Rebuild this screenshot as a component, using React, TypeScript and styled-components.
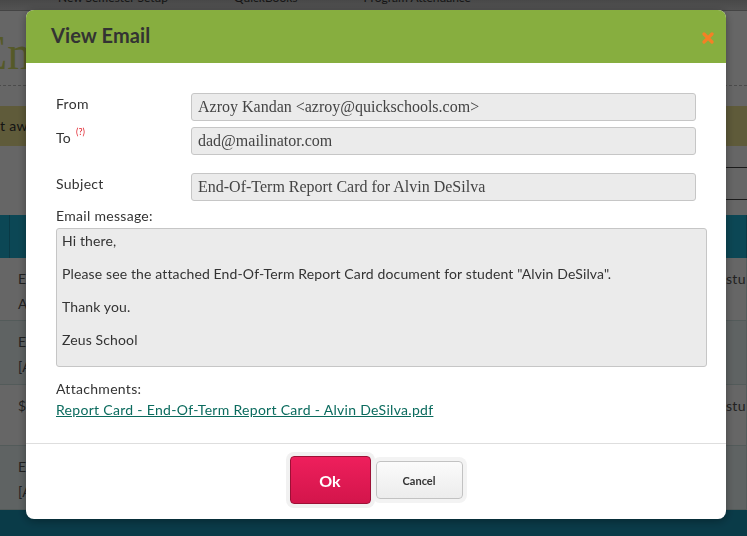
import React from 'react';
import styled, { createGlobalStyle } from 'styled-components';

const GlobalStyle = createGlobalStyle`
  html, body {
    margin: 0;
    padding: 0;
    width: 747px;
    height: 536px;
    overflow: hidden;
    background: #fff;
  }
  * {
    box-sizing: border-box;
  }
`;

const SANS = `Lato, "Open Sans", "Liberation Sans", sans-serif`;
const SERIF = `"Liberation Serif", "DejaVu Serif", serif`;

const message = `Hi there,

Please see the attached End-Of-Term Report Card document for student "Alvin DeSilva".

Thank you.

Zeus School`;

const rows = [
  { left: ['Email', 'Alvin DeSilva'], right: 'student', alt: false },
  { left: ['Email', '[Alvin DeSilva]'], right: '', alt: true },
  { left: ['$ Invoice'], right: 'student', alt: false },
  { left: ['Email', '[Alvin DeSilva]'], right: '', alt: true },
];

const App = () => {
  return (
    <>
      <GlobalStyle />
      <Page>
        <NavBar>
          <NavItem>New Semester Setup</NavItem>
          <NavItem>QuickBooks</NavItem>
          <NavItem>Program Attendance</NavItem>
        </NavBar>
        <PageTitle>Email Report Cards</PageTitle>
        <Banner>ot awaiting delivery are listed below.</Banner>
        <Toolbar>
          <ToolBox />
        </Toolbar>
        <Table>
          <HeadCell />
          <HeadCell />
          <HeadCell />
          {rows.map((r, i) => (
            <React.Fragment key={i}>
              <Cell $alt={r.alt} />
              <Cell $alt={r.alt}>
                {r.left.map((l) => (
                  <div key={l}>{l}</div>
                ))}
              </Cell>
              <Cell $alt={r.alt}>{r.right}</Cell>
            </React.Fragment>
          ))}
        </Table>
        <PageFooter />
      </Page>

      <Curtain />

      <Modal>
        <Header>
          <Title>View Email</Title>
          <CloseButton aria-label="close">
            <svg width="12" height="12" viewBox="0 0 12 12">
              <path d="M2 2 L10 10 M10 2 L2 10" stroke="#f58025" strokeWidth="3.2" strokeLinecap="round" />
            </svg>
          </CloseButton>
        </Header>

        <Body>
          <FieldRow>
            <Label>From</Label>
            <Input>Azroy Kandan &lt;azroy@quickschools.com&gt;</Input>
          </FieldRow>
          <FieldRow $gap={6}>
            <Label>
              To<Help>(?)</Help>
            </Label>
            <Input>dad@mailinator.com</Input>
          </FieldRow>
          <FieldRow $gap={18}>
            <Label>Subject</Label>
            <Input>End-Of-Term Report Card for Alvin DeSilva</Input>
          </FieldRow>

          <BlockLabel>Email message:</BlockLabel>
          <Message>{message}</Message>

          <BlockLabel $top={14}>Attachments:</BlockLabel>
          <AttachLink href="#">Report Card - End-Of-Term Report Card - Alvin DeSilva.pdf</AttachLink>
        </Body>

        <Footer>
          <OkButton>Ok</OkButton>
          <CancelButton>Cancel</CancelButton>
        </Footer>
      </Modal>
    </>
  );
};

/* ---------- page behind the dialog ---------- */

const Page = styled.div`
  width: 747px;
  height: 536px;
  display: flex;
  flex-direction: column;
  font-family: ${SANS};
  color: #555;
  overflow: hidden;
`;

const NavBar = styled.div`
  height: 11px;
  flex: none;
  background: linear-gradient(#b4b4b4, #cdcdcd);
  border-bottom: 1px solid #aaa;
  display: flex;
  gap: 66px;
  padding-left: 58px;
  overflow: hidden;
`;

const NavItem = styled.span`
  font-size: 12px;
  line-height: 14px;
  margin-top: -9px;
  color: #333;
  white-space: nowrap;
`;

const PageTitle = styled.h1`
  margin: 0;
  height: 75px;
  padding: 16px 0 0 0;
  margin-left: -22px;
  font-family: ${SERIF};
  font-weight: normal;
  font-size: 48px;
  line-height: 52px;
  color: #d4de66;
  border-bottom: 1px dashed #bbb;
  white-space: nowrap;
  flex: none;
`;

const Banner = styled.div`
  margin-top: 20px;
  height: 40px;
  flex: none;
  background: #ede391;
  font-size: 14px;
  letter-spacing: 0.3px;
  line-height: 40px;
  color: #333;
  margin-left: -8px;
  white-space: nowrap;
`;

const Toolbar = styled.div`
  height: 69px;
  flex: none;
  display: flex;
  justify-content: flex-end;
  padding-top: 21px;
`;

const ToolBox = styled.div`
  width: 160px;
  height: 33px;
  border-top: 1px solid #444;
  border-bottom: 1px solid #444;
`;

const Table = styled.div`
  display: grid;
  grid-template-columns: 10px 708px 1fr;
  grid-template-rows: 43px 63px 64px 61px 64px;
  flex: none;
`;

const HeadCell = styled.div`
  background: #20b2d4;
  border-right: 1px solid #1a90ad;
`;

const Cell = styled.div<{ $alt?: boolean }>`
  background: ${({ $alt }) => ($alt ? '#eef8f8' : '#fff')};
  border-right: 1px solid #cfe3e2;
  border-bottom: 1px solid #cfe3e2;
  padding: 8px 8px 0 8px;
  font-size: 14px;
  letter-spacing: 0.3px;
  line-height: 25px;
  color: #555;
  white-space: nowrap;
  overflow: hidden;
`;

const PageFooter = styled.div`
  flex: 1;
  background: #1a93b5;
`;

const Curtain = styled.div`
  position: fixed;
  inset: 0;
  background: rgba(0, 0, 0, 0.6);
`;

/* ---------- dialog ---------- */

const Modal = styled.div`
  position: fixed;
  top: 10px;
  left: 26px;
  width: 700px;
  background: #fff;
  border-radius: 8px;
  overflow: hidden;
  box-shadow: 0 2px 10px rgba(0, 0, 0, 0.35);
  font-family: ${SANS};
  color: #333;
`;

const Header = styled.div`
  height: 53px;
  background: #87ae3f;
  display: flex;
  align-items: center;
  justify-content: space-between;
  padding: 0 12px 3px 25px;
`;

const Title = styled.h2`
  margin: 0;
  font-size: 20px;
  line-height: 24px;
  font-weight: 700;
  color: #333;
  letter-spacing: 0.1px;
`;

const CloseButton = styled.button`
  border: none;
  background: transparent;
  padding: 0;
  width: 12px;
  height: 12px;
  display: flex;
  align-items: center;
  justify-content: center;
  margin-top: 5px;
  cursor: pointer;
`;

const Body = styled.div`
  padding: 30px 19px 25px 30px;
  display: flex;
  flex-direction: column;
  letter-spacing: 0.3px;
`;

const FieldRow = styled.div<{ $gap?: number }>`
  display: grid;
  grid-template-columns: 135px 505px;
  margin-top: ${({ $gap }) => $gap ?? 0}px;
`;

const Label = styled.div`
  font-size: 14px;
  line-height: 16px;
  padding-top: 3px;
  color: #333;
`;

const Help = styled.sup`
  font-size: 9px;
  color: #e0202a;
  margin-left: 5px;
  vertical-align: 8px;
  line-height: 0;
  letter-spacing: 0;
`;

const Input = styled.div`
  height: 28px;
  background: #ebebeb;
  border: 1px solid #c6c6c6;
  border-radius: 3px;
  padding: 0 6px;
  font-family: ${SERIF};
  font-size: 16px;
  line-height: 26px;
  letter-spacing: 0;
  color: #444;
  white-space: nowrap;
`;

const BlockLabel = styled.div<{ $top?: number }>`
  font-size: 14px;
  line-height: 16px;
  margin-top: ${({ $top }) => $top ?? 7}px;
  color: #333;
`;

const Message = styled.div`
  margin-top: 4px;
  height: 139px;
  background: #ebebeb;
  border: 1px solid #c6c6c6;
  border-radius: 3px;
  padding: 4px 5px;
  font-size: 14px;
  line-height: 16.5px;
  letter-spacing: 0.13px;
  white-space: pre-wrap;
  color: #333;
`;

const AttachLink = styled.a`
  margin-top: 5px;
  font-size: 14px;
  line-height: 16px;
  color: #0b6b5e;
  text-decoration: underline;
  align-self: flex-start;
`;

const Footer = styled.div`
  height: 76px;
  border-top: 1px solid #dedede;
  display: flex;
  align-items: center;
  justify-content: center;
  gap: 5px;
  padding-bottom: 3px;
`;

const OkButton = styled.button`
  width: 81px;
  height: 48px;
  border: 1px solid #9d1036;
  border-radius: 4px;
  background: linear-gradient(#ee1f5c, #d3154b);
  box-shadow: 0 0 0 4px #f1f1f1;
  color: #fff;
  font-family: ${SANS};
  font-weight: 700;
  font-size: 16px;
  cursor: pointer;
`;

const CancelButton = styled.button`
  width: 87px;
  height: 38px;
  border: 1px solid #c2c2c2;
  border-radius: 4px;
  background: linear-gradient(#fbfbfb, #ececec);
  box-shadow: 0 0 0 4px #f3f3f3;
  color: #333;
  font-family: ${SANS};
  font-weight: 700;
  font-size: 11px;
  cursor: pointer;
`;

export default App;
